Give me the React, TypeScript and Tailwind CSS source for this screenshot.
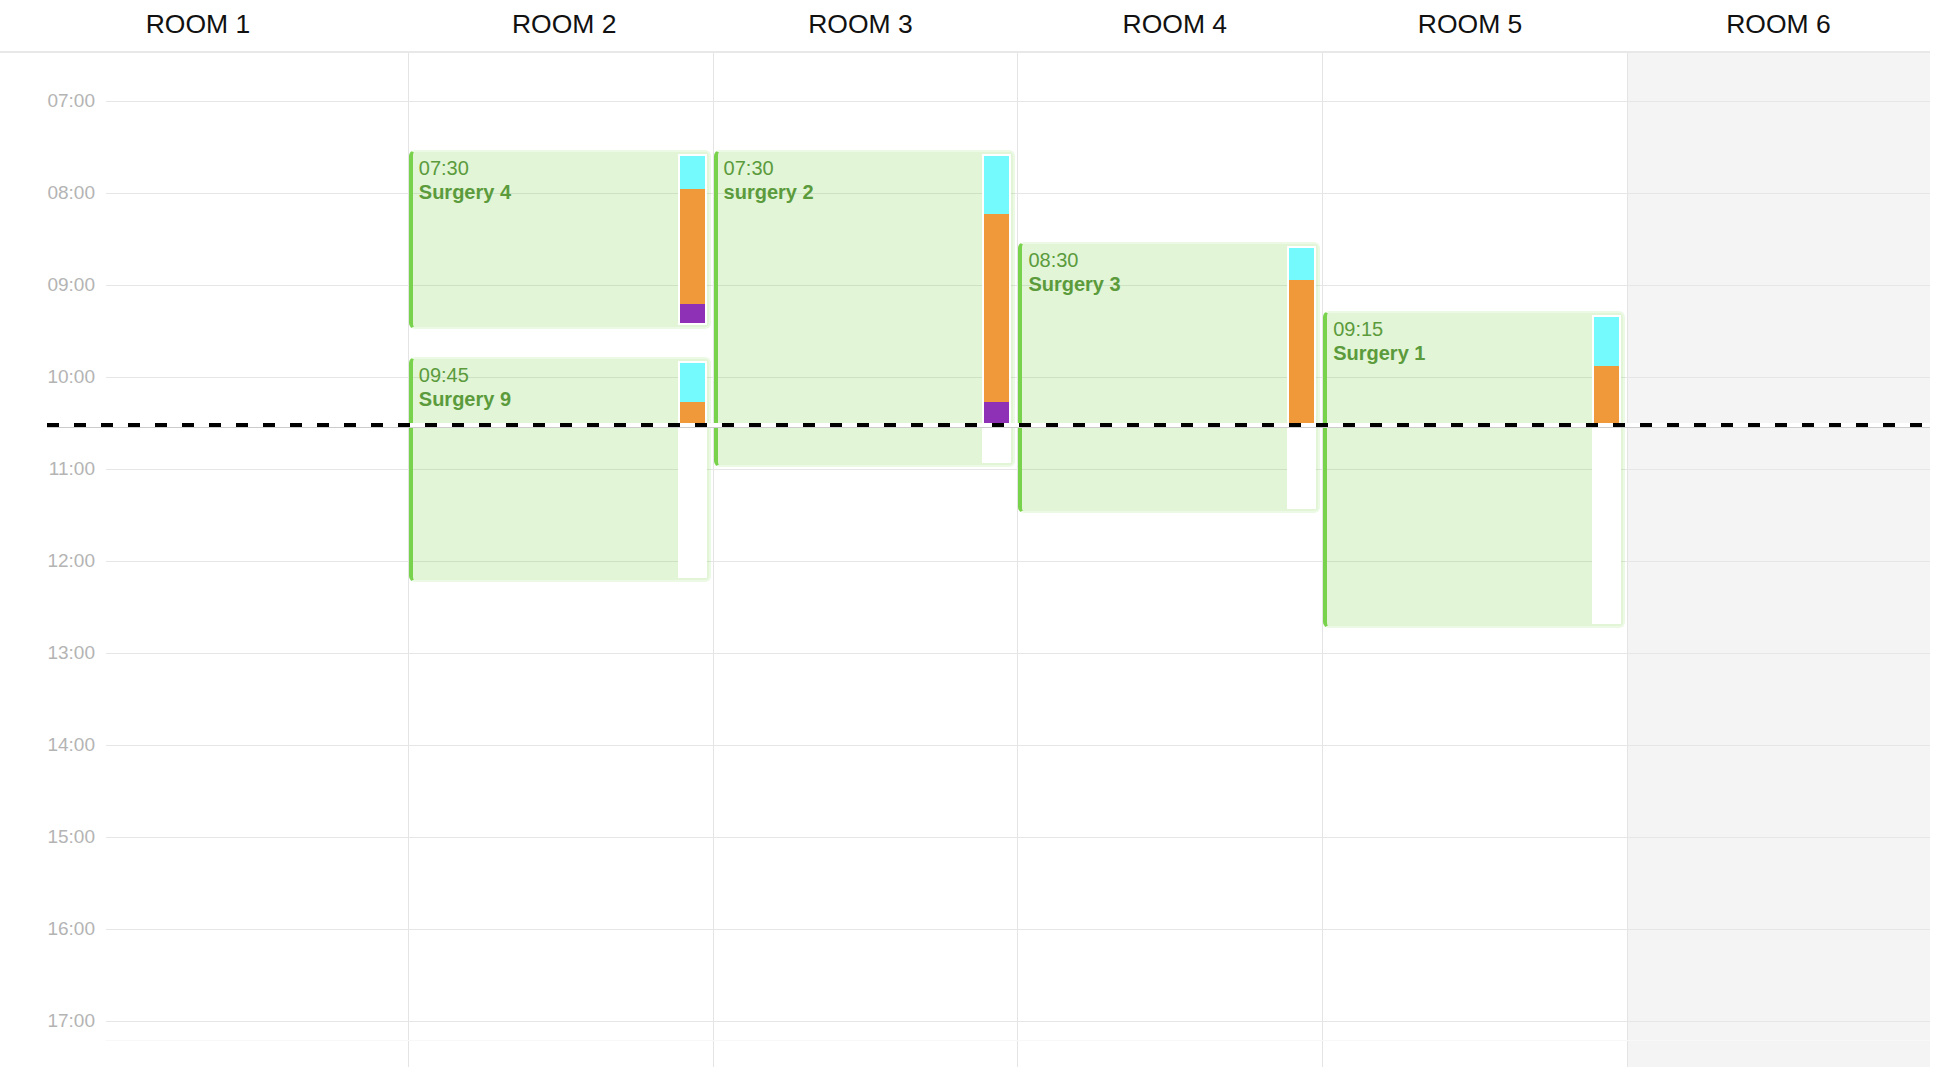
import React from "react";

const HOUR_PX = 92;
const DAY_START = 7;
const TOP_OFFSET = 48; // px from top of grid body to the 07:00 line
const NOW = 10.5;

const hourY = (t: number) => TOP_OFFSET + (t - DAY_START) * HOUR_PX;
const minPx = (m: number) => (m * HOUR_PX) / 60;

const CYAN = "bg-[#74f9fd]";
const ORANGE = "bg-[#f0993a]";
const PURPLE = "bg-[#8e31b6]";

// minutes left undefined means the phase is still running (ends at now)
type Phase = { color: string; minutes?: number };

interface Surgery {
  room: number;
  start: number;
  end: number;
  time: string;
  name: string;
  phases: Phase[];
}

const rooms = ["ROOM 1", "ROOM 2", "ROOM 3", "ROOM 4", "ROOM 5", "ROOM 6"];

// header cells line up with the grid columns, labels sit a little off-centre
const headerCells = [
  "flex w-[407.8px] shrink-0 items-center justify-center pb-[2px] pr-[12px]",
  "flex w-[304.8px] shrink-0 items-center justify-center pb-[2px] pl-[8px]",
  "flex w-[304.8px] shrink-0 items-center justify-center pb-[2px] pr-[9px]",
  "flex w-[304.8px] shrink-0 items-center justify-center pb-[2px] pl-[10px]",
  "flex w-[304.8px] shrink-0 items-center justify-center pb-[2px] pr-[9px]",
  "flex flex-1 items-center justify-center pb-[2px]",
];

const hours = ["07:00", "08:00", "09:00", "10:00", "11:00", "12:00", "13:00", "14:00", "15:00", "16:00", "17:00"];

const surgeries: Surgery[] = [
  {
    room: 2,
    start: 7.5,
    end: 9.5,
    time: "07:30",
    name: "Surgery 4",
    phases: [
      { color: CYAN, minutes: 22 },
      { color: ORANGE, minutes: 75 },
      { color: PURPLE, minutes: 14 },
    ],
  },
  {
    room: 2,
    start: 9.75,
    end: 12.25,
    time: "09:45",
    name: "Surgery 9",
    phases: [{ color: CYAN, minutes: 26 }, { color: ORANGE }],
  },
  {
    room: 3,
    start: 7.5,
    end: 11,
    time: "07:30",
    name: "surgery 2",
    phases: [
      { color: CYAN, minutes: 38 },
      { color: ORANGE, minutes: 123 },
      { color: PURPLE },
    ],
  },
  {
    room: 4,
    start: 8.5,
    end: 11.5,
    time: "08:30",
    name: "Surgery 3",
    phases: [{ color: CYAN, minutes: 21 }, { color: ORANGE }],
  },
  {
    room: 5,
    start: 9.25,
    end: 12.75,
    time: "09:15",
    name: "Surgery 1",
    phases: [{ color: CYAN, minutes: 32 }, { color: ORANGE }],
  },
];

function SurgeryCard({ s }: { s: Surgery }) {
  const top = hourY(s.start) + 2.5;
  const height = (s.end - s.start) * HOUR_PX - 5;
  const barInnerTop = 6; // border + offset + padding
  const nowInBar = hourY(NOW) - top - barInnerTop;

  let used = 0;
  const segs = s.phases.map((p) => {
    const h = p.minutes !== undefined ? minPx(p.minutes) : Math.max(0, nowInBar - used);
    used += h;
    return { color: p.color, h };
  });

  return (
    <div
      className="absolute left-0 right-[2px] z-20 rounded-[6px] border-2 border-l-4 border-[rgba(122,209,74,0.14)] border-l-[#78d24b] bg-[rgba(122,209,74,0.22)] bg-clip-padding pl-[6px] pt-[4px] text-[#5b9b3c]"
      style={{ top, height }}
    >
      <div className="text-[20px] leading-[24px]">{s.time}</div>
      <div className="text-[20px] font-bold leading-[24px]">{s.name}</div>
      <div className="absolute top-[2px] right-[2px] bottom-[2px] w-[29px] bg-white p-[2px]">
        <div className="flex h-full flex-col overflow-hidden">
          {segs.map((seg, i) => (
            <div key={i} className={`${seg.color} shrink-0`} style={{ height: seg.h }} />
          ))}
        </div>
      </div>
    </div>
  );
}

export default function App() {
  return (
    <div className="min-h-screen bg-white font-['Liberation_Sans',Arial,sans-serif]">
      <div className="w-[1930px]">
        {/* Room header */}
        <div className="flex h-[53px] border-b-2 border-[#e8e8e8] text-[26.5px] leading-none text-[#111]">
          {rooms.map((r, i) => (
            <div key={r} className={headerCells[i]}>
              {r}
            </div>
          ))}
        </div>

        {/* Grid body */}
        <div className="relative h-[1014px]">
          <div className="flex h-full">
            <div className="w-[103px] shrink-0" />
            {rooms.map((r, i) => (
              <div
                key={r}
                className={
                  i === 0
                    ? "relative w-[304.8px] shrink-0"
                    : i === 5
                    ? "relative flex-1 border-l border-[#e4e4e4] bg-[#f4f4f4]"
                    : "relative w-[304.8px] shrink-0 border-l border-[#e4e4e4]"
                }
              >
                {surgeries
                  .filter((s) => s.room === i + 1)
                  .map((s) => (
                    <SurgeryCard key={s.name} s={s} />
                  ))}
              </div>
            ))}
          </div>

          {/* Hour lines */}
          <div className="pointer-events-none absolute inset-0 z-10 flex flex-col">
            <div className="h-[48px] shrink-0" />
            {hours.map((h, i) => (
              <div key={h} className={i === hours.length - 1 ? "flex h-[20px] shrink-0" : "flex h-[92px] shrink-0"}>
                <div className="-mt-[11.5px] w-[106px] shrink-0 pr-[11px] text-right text-[19px] leading-[22px] text-[#b4b4b4]">
                  {h}
                </div>
                <div
                  className={
                    i === hours.length - 1
                      ? "flex-1 border-t border-b border-t-[#e6e6e6] border-b-[#f8f8f8]"
                      : "flex-1 border-t border-[#e6e6e6]"
                  }
                />
              </div>
            ))}
          </div>

          {/* Current time */}
          <div className="pointer-events-none absolute right-0 left-[47px] z-30" style={{ top: hourY(NOW) }}>
            <div className="h-[4px] bg-[repeating-linear-gradient(90deg,#000_0px,#000_12px,#fff_12px,#fff_27px)]" />
            <div className="h-[1px] bg-[#cccccc]" />
          </div>
        </div>
      </div>
    </div>
  );
}
